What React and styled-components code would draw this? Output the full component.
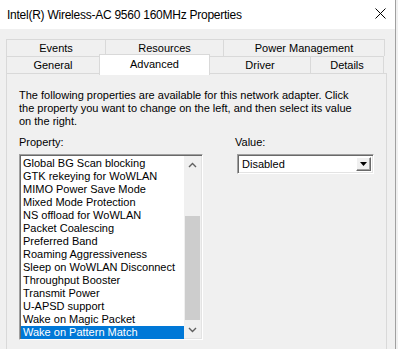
import React, { useState } from 'react';
import styled, { createGlobalStyle } from 'styled-components';

const GlobalStyle = createGlobalStyle`
  html, body {
    margin: 0;
    padding: 0;
    background: #f0f0f0;
  }
  body {
    font-family: "Liberation Sans", Arial, sans-serif;
    font-size: 11px;
    color: #000;
  }
`;

const filasTabs = [
  [
    { nombre: 'Events', ancho: 100 },
    { nombre: 'Resources', ancho: 119 },
    { nombre: 'Power Management', ancho: 162 },
  ],
  [
    { nombre: 'General', ancho: 94 },
    { nombre: 'Advanced', ancho: 111, activo: true },
    { nombre: 'Driver', ancho: 102 },
    { nombre: 'Details', ancho: 74 },
  ],
];

const propiedades = [
  'Global BG Scan blocking',
  'GTK rekeying for WoWLAN',
  'MIMO Power Save Mode',
  'Mixed Mode Protection',
  'NS offload for WoWLAN',
  'Packet Coalescing',
  'Preferred Band',
  'Roaming Aggressiveness',
  'Sleep on WoWLAN Disconnect',
  'Throughput Booster',
  'Transmit Power',
  'U-APSD support',
  'Wake on Magic Packet',
  'Wake on Pattern Match',
];

const Chevron = ({ abajo }) => (
  <svg width="9" height="6" viewBox="0 0 9 6">
    <path
      d={abajo ? 'M1 1 L4.5 4.5 L8 1' : 'M1 5 L4.5 1.5 L8 5'}
      fill="none"
      stroke="#606060"
      strokeWidth="1.4"
    />
  </svg>
);

const App = () => {
  const [seleccion, cambiarSeleccion] = useState('Wake on Pattern Match');

  return (
    <>
      <GlobalStyle />
      <Ventana>
        <BarraTitulo>
          <Titulo>Intel(R) Wireless-AC 9560 160MHz Properties</Titulo>
          <Cerrar>
            <svg width="11" height="11" viewBox="0 0 11 11">
              <path d="M0.5 0.5 L10.5 10.5 M10.5 0.5 L0.5 10.5" stroke="#000" strokeWidth="1" />
            </svg>
          </Cerrar>
        </BarraTitulo>

        <Hoja>
          <Tabs>
            {filasTabs.map((fila, i) => (
              <FilaTabs key={i}>
                {fila.map(tab => (
                  <Tab key={tab.nombre} $ancho={tab.ancho} $activo={tab.activo}>
                    {tab.nombre}
                  </Tab>
                ))}
              </FilaTabs>
            ))}
          </Tabs>

          <Panel>
            <Descripcion>
              The following properties are available for this network adapter. Click
              <br />
              the property you want to change on the left, and then select its value
              <br />
              on the right.
            </Descripcion>

            <Columnas>
              <Columna>
                <Etiqueta>Property:</Etiqueta>
                <Lista>
                  <Items>
                    {propiedades.map(p => (
                      <Item
                        key={p}
                        $seleccionado={p === seleccion}
                        onClick={() => cambiarSeleccion(p)}
                      >
                        {p}
                      </Item>
                    ))}
                  </Items>
                  <Scroll>
                    <Flecha><Chevron /></Flecha>
                    <Pista>
                      <Pulgar />
                    </Pista>
                    <Flecha><Chevron abajo /></Flecha>
                  </Scroll>
                </Lista>
              </Columna>

              <ColumnaValor>
                <Etiqueta>Value:</Etiqueta>
                <Combo>
                  <ComboTexto>Disabled</ComboTexto>
                  <ComboBoton>
                    <svg width="7" height="4" viewBox="0 0 7 4">
                      <path d="M0 0 L7 0 L3.5 4 Z" fill="#000" />
                    </svg>
                  </ComboBoton>
                </Combo>
              </ColumnaValor>
            </Columnas>
          </Panel>
        </Hoja>
      </Ventana>
    </>
  );
};

export default App;

const Ventana = styled.div`
  width: 395px;
  height: 349px;
  border-right: 1px solid #a0a0a0;
  background: #f0f0f0;
  display: flex;
  flex-direction: column;
  overflow: hidden;
`;

const BarraTitulo = styled.div`
  height: 29px;
  flex-shrink: 0;
  background: #fff;
  display: flex;
  align-items: center;
  justify-content: space-between;
  padding: 0 9px 0 7px;
`;

const Titulo = styled.span`
  font-family: "Liberation Sans", Arial, sans-serif;
  font-size: 12px;
  letter-spacing: -0.25px;
  color: #000;
`;

const Cerrar = styled.div`
  width: 11px;
  height: 11px;
  display: flex;
  margin-top: -2px;
`;

const Hoja = styled.div`
  padding: 10px 0 0 6px;
  display: flex;
  flex-direction: column;
`;

const Tabs = styled.div`
  display: flex;
  flex-direction: column;
`;

const FilaTabs = styled.div`
  display: flex;
  height: 17px;
`;

const Tab = styled.div`
  width: ${p => p.$ancho}px;
  box-sizing: border-box;
  border: 1px solid #d9d9d9;
  border-bottom: none;
  margin-right: -1px;
  background: ${p => (p.$activo ? '#fff' : '#f0f0f0')};
  display: flex;
  align-items: center;
  justify-content: center;
  line-height: 1;
  position: relative;
  z-index: ${p => (p.$activo ? 2 : 1)};
  height: ${p => (p.$activo ? '21px' : '17px')};
  margin-top: ${p => (p.$activo ? '-2px' : '0')};
  padding-bottom: ${p => (p.$activo ? '2px' : '0')};
`;

const Panel = styled.div`
  width: 381px;
  height: 300px;
  box-sizing: border-box;
  border: 1px solid #d9d9d9;
  background: #f0f0f0;
  padding: 15px 12px 0 12px;
  position: relative;
  z-index: 1;
`;

const Descripcion = styled.p`
  margin: 0;
  line-height: 13px;
`;

const Columnas = styled.div`
  display: flex;
  margin-top: 8px;
`;

const Columna = styled.div`
  display: flex;
  flex-direction: column;
  width: 184px;
`;

const ColumnaValor = styled(Columna)`
  width: 140px;
  margin-left: 32px;
`;

const Etiqueta = styled.div`
  line-height: 13px;
  margin-bottom: 5px;
`;

const Lista = styled.div`
  width: 184px;
  height: 186px;
  box-sizing: border-box;
  border: 1px solid;
  border-color: #a0a0a0 #fff #fff #a0a0a0;
  box-shadow: inset 1px 1px 0 #696969, inset -1px -1px 0 #e3e3e3;
  background: #fff;
  padding: 1px;
  display: flex;
`;

const Items = styled.div`
  flex: 1;
  display: flex;
  flex-direction: column;
  padding-top: 1px;
`;

const Item = styled.div`
  height: 13px;
  line-height: 13px;
  padding-left: 2px;
  white-space: nowrap;
  cursor: default;
  background: ${p => (p.$seleccionado ? '#0078d7' : 'transparent')};
  color: ${p => (p.$seleccionado ? '#fff' : '#000')};
`;

const Scroll = styled.div`
  width: 17px;
  background: #f0f0f0;
  display: flex;
  flex-direction: column;
`;

const Flecha = styled.div`
  height: 17px;
  display: flex;
  align-items: center;
  justify-content: center;
`;

const Pista = styled.div`
  flex: 1;
  padding: 43px 1px 0 1px;
  display: flex;
  flex-direction: column;
`;

const Pulgar = styled.div`
  height: 104px;
  background: #cdcdcd;
`;

const Combo = styled.div`
  width: 137px;
  height: 20px;
  margin-left: 2px;
  box-sizing: border-box;
  border: 1px solid;
  border-color: #a0a0a0 #fff #fff #a0a0a0;
  box-shadow: inset 1px 1px 0 #696969, inset -1px -1px 0 #e3e3e3;
  background: #fff;
  padding: 2px;
  display: flex;
  align-items: stretch;
`;

const ComboTexto = styled.div`
  flex: 1;
  padding-left: 2px;
  line-height: 14px;
`;

const ComboBoton = styled.div`
  width: 15px;
  box-sizing: border-box;
  background: #f0f0f0;
  border: 1px solid;
  border-color: #fff #696969 #696969 #fff;
  box-shadow: inset -1px -1px 0 #a0a0a0;
  display: flex;
  align-items: center;
  justify-content: center;
`;
